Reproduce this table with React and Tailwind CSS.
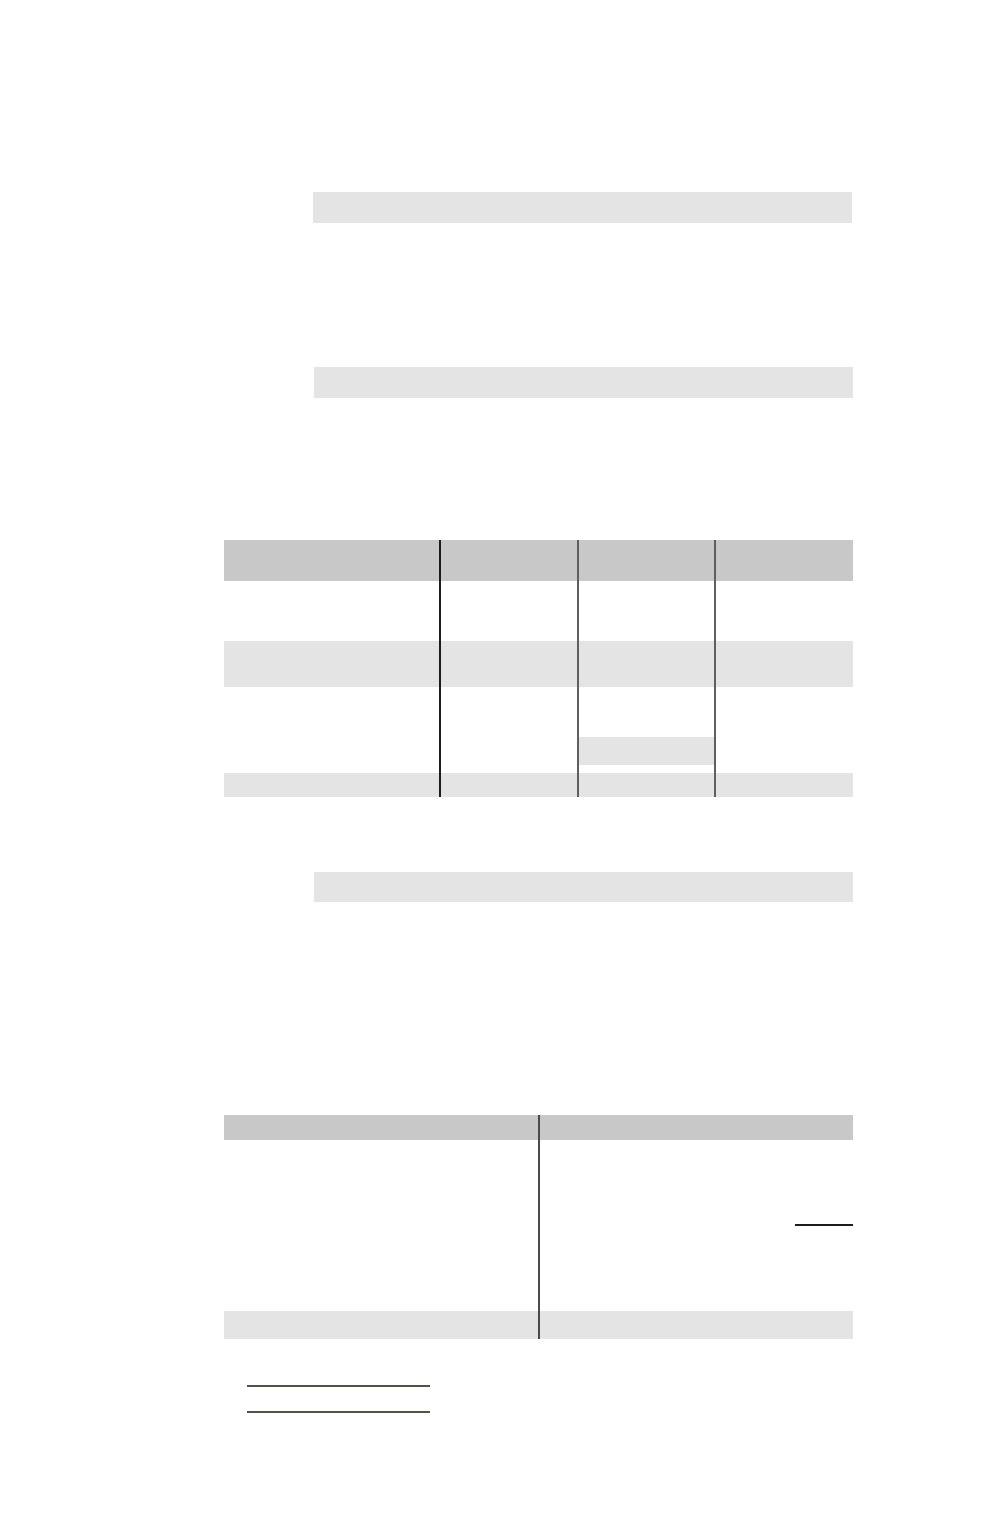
import React from "react";

export default function App() {
  const c1 = "w-[217px] border-r-2 border-[#1c1c1c] h-full";
  const c2 = "w-[138px] border-r-2 border-[#5f5f5f] h-full";
  const c3 = "w-[137px] border-r-2 border-[#5f5f5f] h-full";
  const c4 = "w-[137px] h-full";
  return (
    <div className="min-h-[1528px] bg-white pt-[192px] font-['Liberation_Sans',sans-serif]">
      <div className="ml-[313px] h-[31px] w-[539px] bg-[#e4e4e4]" />
      <div className="ml-[314px] mt-[144px] h-[31px] w-[539px] bg-[#e4e4e4]" />

      <div className="ml-[224px] mt-[142px] w-[629px]">
        <div className="flex h-[41px] bg-[#c8c8c8]">
          <div className={c1} />
          <div className={c2} />
          <div className={c3} />
          <div className={c4} />
        </div>
        <div className="flex h-[60px] bg-white">
          <div className={c1} />
          <div className={c2} />
          <div className={c3} />
          <div className={c4} />
        </div>
        <div className="flex h-[46px] bg-[#e4e4e4]">
          <div className={c1} />
          <div className={c2} />
          <div className={c3} />
          <div className={c4} />
        </div>
        <div className="flex h-[86px] bg-white">
          <div className={c1} />
          <div className={c2} />
          <div className={`${c3} flex flex-col pt-[50px] pb-[8px]`}>
            <div className="flex-1 bg-[#e4e4e4]" />
          </div>
          <div className={c4} />
        </div>
        <div className="flex h-[24px] bg-[#e4e4e4]">
          <div className={c1} />
          <div className={c2} />
          <div className={c3} />
          <div className={c4} />
        </div>
      </div>

      <div className="ml-[314px] mt-[75px] h-[30px] w-[539px] bg-[#e4e4e4]" />

      <div className="ml-[224px] mt-[213px] w-[629px]">
        <div className="flex h-[25px] bg-[#c8c8c8]">
          <div className="h-full w-[316px] border-r-2 border-[#4a4a4a]" />
          <div className="h-full flex-1" />
        </div>
        <div className="flex h-[171px] bg-white">
          <div className="h-full w-[316px] border-r-2 border-[#4a4a4a]" />
          <div className="flex h-full flex-1 flex-col items-end pt-[84px]">
            <div className="h-[2px] w-[58px] bg-[#1c1c1c]" />
          </div>
        </div>
        <div className="flex h-[28px] bg-[#e4e4e4]">
          <div className="h-full w-[316px] border-r-2 border-[#4a4a4a]" />
          <div className="h-full flex-1" />
        </div>
      </div>

      <div className="ml-[247px] mt-[46px] h-[2px] w-[183px] bg-[#555048]" />
      <div className="ml-[247px] mt-[24px] h-[2px] w-[183px] bg-[#555048]" />
    </div>
  );
}
